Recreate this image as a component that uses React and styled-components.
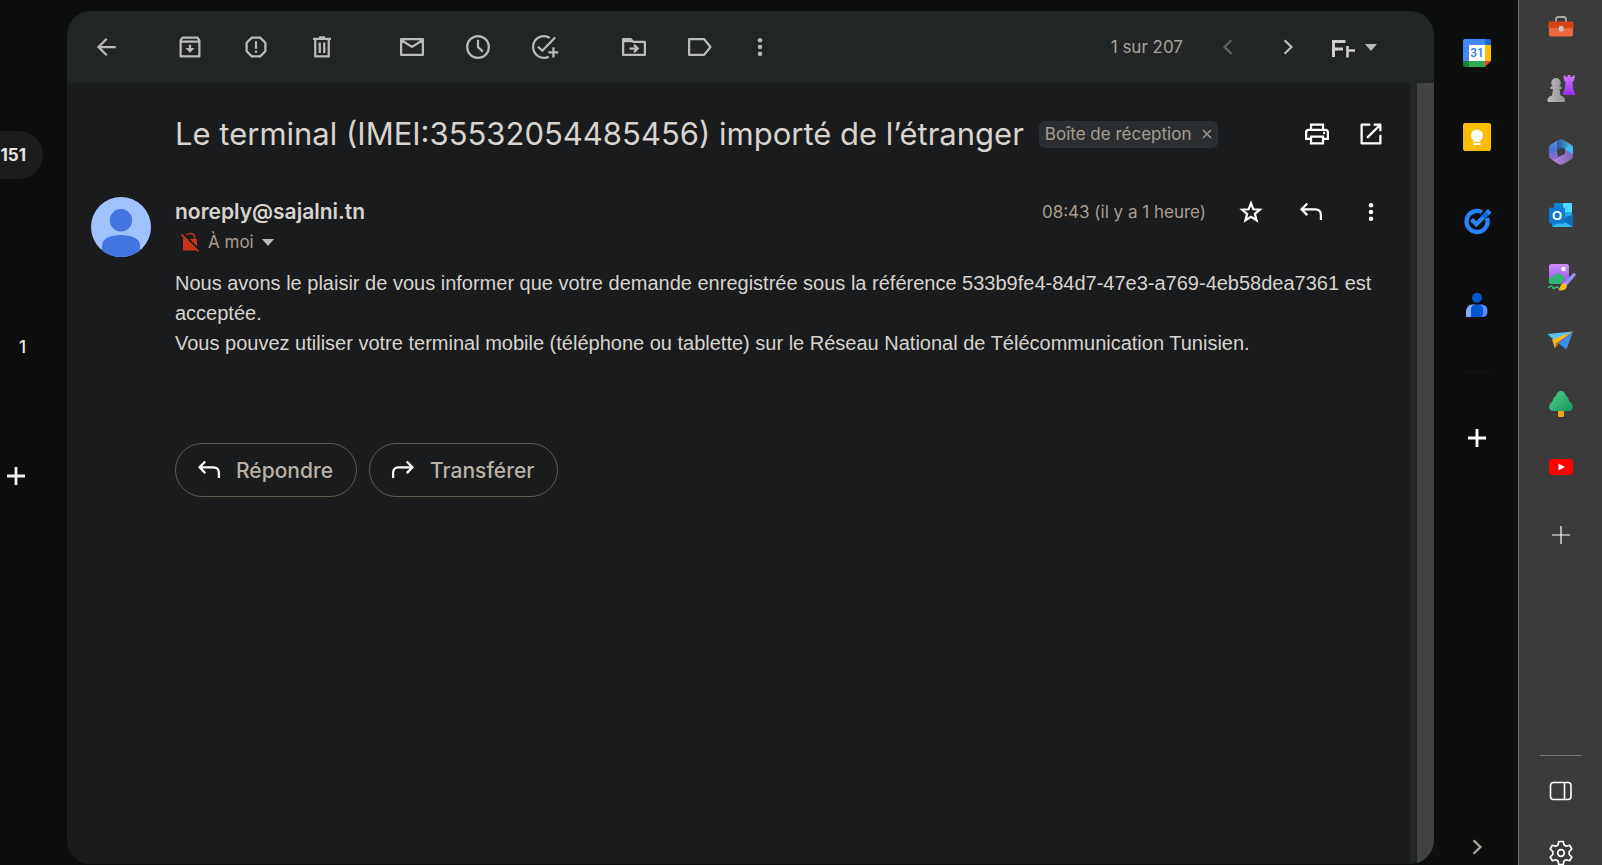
import React from "react";
import styled, { createGlobalStyle } from "styled-components";

const GlobalStyle = createGlobalStyle`
  * { box-sizing: border-box; }
  body {
    margin: 0;
    background: #0d0f0e;
    color: #d8d4cf;
    font-family: Inter, "Liberation Sans", sans-serif;
  }
  button { font: inherit; color: inherit; border: 0; padding: 0; background: none; cursor: pointer; }
`;

/* ---------- layout ---------- */

const Page = styled.div`
  display: grid;
  grid-template-columns: 67px minmax(0, 1fr) 84px 84px;
  height: 100vh;
  min-height: 600px;
  overflow: hidden;
`;

const Rail = styled.nav`
  display: flex;
  flex-direction: column;
  padding-top: 131px;
  font-size: 17px;
  line-height: 22px;
`;

const RailPill = styled.a`
  display: flex;
  align-items: center;
  justify-content: flex-end;
  width: 43px;
  height: 48px;
  padding-right: 17px;
  border-radius: 0 24px 24px 0;
  background: #1b1c1d;
  color: #e8e6e3;
  font-weight: 700;
  text-decoration: none;
`;

const RailCount = styled.a`
  width: 26px;
  margin-top: 157px;
  color: #e8e6e3;
  font-weight: 500;
  text-align: right;
  text-decoration: none;
`;

const RailAdd = styled.button`
  display: flex;
  width: 30px;
  margin: 103px 0 0 1px;
  color: #f2f0ed;
`;

const Panel = styled.main`
  display: flex;
  flex-direction: column;
  margin: 11px 0 1px;
  border-radius: 24px;
  background: #222526;
  overflow: hidden;
`;

const Toolbar = styled.header`
  display: flex;
  align-items: center;
  flex: none;
  height: 72px;
  padding: 0 57px 0 24px;
  color: #bcbbb9;
`;

const Group = styled.div`
  display: flex;
  align-items: center;
  gap: 36px;
  margin-left: ${(p) => p.$start || 0}px;
`;

const Divider = styled.span`
  width: 1px;
  height: 30px;
  margin-left: 30px;
  background: #1f2122;
`;

const IconButton = styled.button`
  display: flex;
  flex: none;
  color: ${(p) => p.$color || "inherit"};
`;

const Pager = styled.div`
  display: flex;
  align-items: center;
  margin-left: auto;
  font-size: 17px;
`;

const PageCount = styled.span`
  margin-right: 30px;
  color: #a8a29a;
`;

const Arrows = styled.div`
  display: flex;
  gap: 30px;
`;

const InputTool = styled.button`
  display: flex;
  align-items: center;
  gap: 9px;
  margin-left: 27px;
`;

const Scroller = styled.div`
  display: flex;
  flex: 1;
  min-height: 0;
`;

const Message = styled.article`
  flex: 1;
  min-width: 0;
  padding: 30px 24px 0;
  background: #1a1b1d;
`;

const Track = styled.div`
  width: 24px;
  padding-left: 7px;
`;

const Thumb = styled.div`
  height: 100%;
  background: #424242;
`;

const TitleRow = styled.div`
  display: flex;
  align-items: center;
  height: 42px;
  padding-left: 84px;
`;

const Title = styled.h1`
  margin: 0;
  font-size: 31px;
  line-height: 42px;
  font-weight: 400;
  white-space: nowrap;
`;

const Tag = styled.span`
  display: flex;
  align-items: center;
  gap: 11px;
  height: 27px;
  margin-left: 15px;
  padding: 0 6px;
  border-radius: 6px;
  background: #2a2e30;
  color: #a89e90;
  font-size: 17px;
  white-space: nowrap;
`;

const TitleActions = styled.div`
  display: flex;
  gap: 24px;
  margin-left: auto;
  color: #fff;
`;

const Sender = styled.section`
  display: grid;
  grid-template-columns: 60px minmax(0, 1fr);
  column-gap: 24px;
  margin-top: 42px;
`;

const SenderLine = styled.div`
  display: flex;
  align-items: center;
  height: 30px;
`;

const Name = styled.h2`
  margin: 0;
  font-size: 21px;
  line-height: 30px;
  font-weight: 600;
`;

const Meta = styled.div`
  display: flex;
  align-items: center;
  gap: 30px;
  margin-left: auto;
  color: #fff;
`;

const Time = styled.time`
  color: #a89e90;
  font-size: 17px;
`;

const Recipient = styled.button`
  display: flex;
  align-items: center;
  gap: 8px;
  height: 30px;
  padding-left: 5px;
  color: #a89e90;
  font-size: 17px;
`;

const Body = styled.div`
  padding: 11px 0 0 84px;
  font: 400 20px/30px "Liberation Sans", Arial, sans-serif;
`;

const Line = styled.p`
  margin: 0;
`;

const Replies = styled.div`
  display: flex;
  gap: 12px;
  padding: 85px 0 0 84px;
`;

const ReplyButton = styled.button`
  display: flex;
  align-items: center;
  gap: 12px;
  height: 54px;
  padding: 0 23px 0 18px;
  border: 1px solid #615a4d;
  border-radius: 27px;
  color: #b9b1a5;
  font-size: 21px;
  font-weight: 500;

  svg { color: #fff; }
`;

const AddOns = styled.aside`
  display: flex;
  flex-direction: column;
  align-items: center;
  padding: 38px 0 3px 1px;
  color: #fff;
`;

const AddOnList = styled.div`
  display: flex;
  flex-direction: column;
  gap: 54px;
`;

const AddOnRule = styled.hr`
  width: 30px;
  margin: 51px 0;
  border: 0;
  border-top: 1px solid #141716;
`;

const AddOnFooter = styled.div`
  margin-top: auto;
  color: #b0a89c;
`;

const Sidebar = styled.aside`
  display: flex;
  flex-direction: column;
  align-items: center;
  padding: 11px 0 0 1px;
  border-left: 1px solid #6d6d6d;
  background: #3b3b3b;
  color: #fff;
`;

const SidebarList = styled.div`
  display: flex;
  flex-direction: column;
  gap: 33px;
`;

const SidebarAdd = styled.div`
  margin-top: 38px;
`;

const SidebarFooter = styled.div`
  display: flex;
  flex-direction: column;
  align-items: center;
  gap: 32px;
  margin: auto 0 -3px;
`;

const SidebarRule = styled.hr`
  width: 42px;
  margin: 0 0 -12px;
  border: 0;
  border-top: 1px solid #777;
`;

/* ---------- icons ---------- */

const Icon = ({ size = 30, box = 20, children, sw = 1.5 }) => (
  <svg width={size} height={size} viewBox={`0 0 ${box} ${box}`} fill="none" stroke="currentColor" strokeWidth={sw} aria-hidden="true">
    {children}
  </svg>
);

const dots = (
  <g fill="currentColor" stroke="none">
    <circle cx="10" cy="5.5" r="1.5" /><circle cx="10" cy="10" r="1.5" /><circle cx="10" cy="14.5" r="1.5" />
  </g>
);
const Dots = () => <Icon>{dots}</Icon>;
const SlimDots = () => <svg width="18" height="30" viewBox="4 0 12 20" aria-hidden="true">{dots}</svg>;
const Caret = () => (
  <svg width="12" height="7" viewBox="0 0 12 7" aria-hidden="true"><path d="M0 0h12L6 7z" fill="#bcbbb9" /></svg>
);
const Back = () => <Icon><path d="M16.5 10H5.5M10.5 4.5 5 10l5.500 5.500" /></Icon>;
const Archive = () => (
  <Icon>
    <path d="M3.75 5.6 5 3.75h10l1.25 1.85v10.65H3.75zM3.75 6.4h12.5M10 8.5v3" strokeLinejoin="round" />
    <path d="M7 10.7h6L10 13.8z" fill="currentColor" stroke="none" />
  </Icon>
);
const Spam = () => (
  <Icon>
    <path d="M7.2 3.75h5.6l3.45 3.45v5.6l-3.45 3.45H7.2L3.75 12.8V7.2zM10 6.2v4.9M10 12.3v1.5" strokeLinejoin="round" />
  </Icon>
);
const Trash = () => <Icon><path d="M4 4.6h12M8 3.6h4M5.5 4.6v11.65h9V4.6M8.5 7v7M11.5 7v7" strokeLinejoin="round" /></Icon>;
const Mail = () => <Icon><path d="M2.75 4.75h14.5v10.5H2.75zM3 5.5l7 4.4 7-4.4" strokeLinejoin="round" /></Icon>;
const Clock = () => <Icon><circle cx="10" cy="10" r="7.25" /><path d="M10 5.2V10l3.2 3.1" /></Icon>;
const TaskAdd = () => (
  <Icon>
    <path d="M13.9 3.9A7.25 7.25 0 1 0 13.2 16.5M6 9.8l2.9 2.7 8.5-8.8M16.3 10.2v6.8M12.9 13.6h6.6" />
  </Icon>
);
const Folder = () => (
  <Icon>
    <path d="M2.75 15.25V4.75h5l1.7 1.75h7.8v8.75z" strokeLinejoin="round" />
    <path d="M2.5 4.5h5.4l1.8 2.3H2.5z" fill="currentColor" stroke="none" />
    <path d="M7 11h5M10 8.5l2.5 2.5-2.5 2.5" />
  </Icon>
);
const Label = () => <Icon><path d="M2.75 4.75h10L17 10l-4.25 5.25h-10z" strokeLinejoin="round" /></Icon>;
const ChevronLeft = () => <Icon><path d="m12.3 5.5-4.6 4.5 4.6 4.5" /></Icon>;
const ChevronRight = () => <Icon><path d="m7.7 5.5 4.6 4.5-4.6 4.5" /></Icon>;
const InputIcon = () => (
  <svg width="26" height="26" viewBox="0 0 26 26" fill="none" stroke="#cfcdca" aria-hidden="true">
    <path d="M3.500 23V6M2 7.500H15.500M3.500 15H13" strokeWidth="3" />
    <path d="M17.500 12v11.500M17.500 16.500H25" strokeWidth="2.600" />
  </svg>
);
const Print = () => (
  <Icon>
    <path d="M6 7V3.75h8V7M5.5 13.3H2.75V9c0-1 .7-1.8 1.7-1.8h11.1c1 0 1.7.8 1.7 1.8v4.3H14.5M6 11.8h8v4.45H6z" />
    <circle cx="14.7" cy="9.3" r=".8" fill="currentColor" stroke="none" />
  </Icon>
);
const OpenNew = () => <Icon><path d="M9.5 3.75H3.75v12.5h12.5V10.5M11.8 3.75h4.45V8.2M16 4l-8.6 8.6" strokeLinejoin="round" /></Icon>;
const Star = () => (
  <Icon>
    <path d="m10 4.2 1.6 4 4.3.3-3.3 2.8 1.1 4.2L10 13.2l-3.7 2.3 1.1-4.2-3.3-2.8 4.3-.3z" />
  </Icon>
);
const Reply = () => <Icon><path d="M7.5 4.3 3.7 8.2l3.8 3.9M4 8.2h9c2.2 0 3.6 1.5 3.6 3.7v3.4" /></Icon>;
const Forward = () => <Icon><path d="m12.5 4.3 3.8 3.9-3.8 3.9M16 8.2H7c-2.2 0-3.6 1.5-3.6 3.7v3.4" /></Icon>;
const Close = () => <Icon size={10} box={10} sw={1.4}><path d="m1 1 8 8M9 1 1 9" /></Icon>;
const Plus = ({ sw = 1.5 }) => <Icon sw={sw}><path d="M10 4v12M4 10h12" /></Icon>;
const BoldPlus = () => <Plus sw={1.9} />;

const NoLock = () => (
  <svg width="20" height="20" viewBox="0 0 20 20" fill="none" aria-hidden="true">
    <path d="M6.500 3C7.500 1.900 9 1.500 10.500 1.500c2.500 0 4 1.700 4 4V8" stroke="#a02e20" strokeWidth="2" />
    <path d="M3 4.500 16.500 18.500H3z" fill="#c5341f" />
    <path d="M9.500 7h7.500v7.500z" fill="#c5341f" />
    <path d="m1.500 2.500 17 17" stroke="#c5341f" strokeWidth="1.800" />
    <path d="m4 2.500 13 13" stroke="#1a1b1d" strokeWidth="1" />
  </svg>
);

const Avatar = () => (
  <svg width="60" height="60" viewBox="0 0 60 60" role="img" aria-label="noreply@sajalni.tn">
    <defs><clipPath id="face"><circle cx="30" cy="30" r="30" /></clipPath></defs>
    <g clipPath="url(#face)">
      <path d="M0 0h60v60H0z" fill="#a0c2ff" />
      <circle cx="30" cy="23.300" r="11.200" fill="#4374e0" />
      <path d="M11 60V48c0-6.500 9-10 19-10s19 3.500 19 10v12z" fill="#4374e0" />
    </g>
  </svg>
);

const DayText = styled.text`
  font: 500 12px Roboto, sans-serif;
  fill: #2f77ee;
`;

const Calendar = () => (
  <svg width="30" height="30" viewBox="0 0 30 30" aria-hidden="true">
    <path d="M3 1h20v6H7v16H1V3a2 2 0 0 1 2-2z" fill="#4285f4" />
    <path d="M23 1h4a2 2 0 0 1 2 2v4h-6z" fill="#1967d2" />
    <path d="M23 7h6v16h-6z" fill="#fbbc04" />
    <path d="M7 23h16v6H7z" fill="#34a853" />
    <path d="M1 23h6v6H3a2 2 0 0 1-2-2z" fill="#188038" />
    <path d="M23 23h6l-6 6z" fill="#ea4335" />
    <path d="M7 7h16v16H7z" fill="#fff" />
    <DayText x="15" y="19" textAnchor="middle">31</DayText>
  </svg>
);
const Keep = () => (
  <svg width="30" height="30" viewBox="0 0 30 30" aria-hidden="true">
    <rect x="1" y="1" width="28" height="28" rx="2" fill="#fbbc04" />
    <circle cx="15" cy="13.500" r="6" fill="#fff" />
    <path d="M11.500 17h7v2.800h-7zM11.500 21h7v2h-7z" fill="#fff" />
  </svg>
);
const Tasks = () => (
  <svg width="30" height="30" viewBox="0 0 30 30" fill="none" aria-hidden="true">
    <path d="M20 6.200A10.500 10.500 0 1 0 25 12" stroke="#2684fc" strokeWidth="4.300" />
    <path d="m9.500 13.500 4.800 4.800L22 10.500" stroke="#2684fc" strokeWidth="4.300" />
    <path d="m21 11.500 6-6" stroke="#0066da" strokeWidth="5" />
    <path d="m23.500 5.500 3.500 3.500 2.500-2.500-3.500-3.500z" fill="#2684fc" />
  </svg>
);
const Contacts = () => (
  <svg width="30" height="30" viewBox="0 0 30 30" aria-hidden="true">
    <circle cx="15" cy="7.800" r="5" fill="#0057cc" />
    <path d="M4 27v-5c0-5 3-7.500 7-7.500h2V27z" fill="#86a9ff" />
    <path d="M17 14.500h2c4 0 6.500 2.500 6.500 6.500s-2 6-5.500 6h-3z" fill="#578cff" />
    <path d="M9 27v-7c0-4 2-5.500 6-5.500s6 1.500 6 5.500v4c0 2-1 3-3 3z" fill="#0057cc" />
  </svg>
);

const Toolbox = () => (
  <svg width="30" height="30" viewBox="0 0 30 30" aria-hidden="true">
    <path d="M10 11V8.500C10 6.700 10.700 6 12.500 6h5c1.800 0 2.500.7 2.500 2.500V11" fill="none" stroke="#a9a9a9" strokeWidth="1.800" />
    <path d="M3 14h24v9.500a2 2 0 0 1-2 2H5a2 2 0 0 1-2-2z" fill="#f0683f" />
    <path d="M3 10.500h24l1 6.500H2z" fill="#d64516" />
    <rect x="13" y="15" width="4.500" height="5.500" rx="1" fill="#c9c4c2" />
  </svg>
);
const Chess = () => (
  <svg width="30" height="30" viewBox="0 0 30 30" aria-hidden="true">
    <defs>
      <linearGradient id="rook" x2="0" y2="1"><stop stopColor="#cc7cff" /><stop offset="1" stopColor="#9a2bfa" /></linearGradient>
      <linearGradient id="pawn"><stop stopColor="#bdbdbd" /><stop offset="1" stopColor="#929292" /></linearGradient>
    </defs>
    <path d="M17.500 1.500h2V3h2V1h3v2h2V1.500H29l-1 5-1.500 1.500 1 8.500 1.500 2V21H17v-2.500l1.500-2L19.500 8 18 6.500z" fill="url(#rook)" />
    <path d="M6.800 12.500a4.800 4.800 0 1 1 6.400 0H15.500v2.500h-2l1 6.500c3 1 4.500 2 4.500 4.500 0 1.500-.5 2-1.500 2H3c-1 0-1.500-.5-1.500-2 0-2.500 1.500-3.500 4.500-4.500l1-6.500H4.500v-2.500z" fill="url(#pawn)" />
  </svg>
);
const Office = () => (
  <svg width="30" height="30" viewBox="0 0 30 30" aria-hidden="true">
    <defs>
      <linearGradient id="offA" x2="0" y2="1"><stop stopColor="#4f9be6" /><stop offset=".5" stopColor="#5070cc" /><stop offset="1" stopColor="#9b6bd0" /></linearGradient>
      <linearGradient id="offB"><stop stopColor="#2b5796" /><stop offset="1" stopColor="#4cc3f3" /></linearGradient>
      <linearGradient id="offC"><stop stopColor="#c48ae0" /><stop offset="1" stopColor="#7762b0" /></linearGradient>
    </defs>
    <path d="M12.500 3 5 7.500c-1.500 1-2 2-2 3.500V19c0 3 3.500 4.500 6 3l3-2-1-9 6-5.500z" fill="url(#offA)" />
    <path d="M12.500 3C14 2 16 2 17.500 3L25 7.500c1.500 1 2 2 2 3.500v6.500l-8-5.500-4-1-4 2.500V7c0-2 .5-3.200 1.500-4z" fill="url(#offB)" />
    <path d="M27 13.500V19c0 1.500-.5 2.500-2 3.500L17.500 27c-1.500 1-3.500 1-5 0L5 22.300c2 .6 3.500.2 5-.8l7-4.500c1.500-1 2-2 2-3.500v-2l6 3.500z" fill="url(#offC)" />
    <path d="m15 10.500 4 1.500v4.500L15 19l-3.500-2v-4z" fill="#3b3b45" />
    <path d="m19 12 8 5.500V11l-4-3z" fill="#43b7ee" />
  </svg>
);
const OutlookText = styled.text`
  font: 700 13px "Liberation Sans", sans-serif;
  fill: #fff;
`;
const Outlook = () => (
  <svg width="30" height="30" viewBox="0 0 30 30" aria-hidden="true">
    <path d="M8 3h18v13H8z" fill="#28a8ea" />
    <path d="M17 3h9v9h-9z" fill="#50d9ff" />
    <path d="M8 3h9v9H8z" fill="#0a84d0" />
    <path d="M6 16h21v9a2 2 0 0 1-2 2H8a2 2 0 0 1-2-2z" fill="#1490df" />
    <path d="m27 14-11 6.500L27 27z" fill="#0d6cb5" />
    <path d="m6 27 10-6.500L27 27z" fill="#36b5ee" />
    <rect x="3" y="7.500" width="16" height="16" rx="1.500" fill="#0f78d4" />
    <OutlookText x="11" y="20" textAnchor="middle">O</OutlookText>
  </svg>
);
const Designer = () => (
  <svg width="30" height="30" viewBox="0 0 30 30" aria-hidden="true">
    <defs><linearGradient id="pic" x2="0" y2="1"><stop stopColor="#cf8bff" /><stop offset="1" stopColor="#8e54e8" /></linearGradient></defs>
    <rect x="3" y="1" width="20" height="20" rx="2.500" fill="url(#pic)" />
    <path d="m3 16 8-5.500c1-.7 2-.7 3 0l5 4.500-5 6H5.500C4 21 3 20 3 18.500z" fill="#2fb673" />
    <circle cx="17.500" cy="6" r="2.300" fill="#fff" />
    <path d="M2 25c3-3 5-2 5 0s4-2 5-1 0 2 2 2" fill="none" stroke="#2fc47d" strokeWidth="1.500" />
    <path d="m17 20.500 10-10c1.500-1.200 3.500.5 2.500 2l-9 10.500z" fill="#8f94fa" />
    <path d="M12.500 27c2-1 1-5 4-6.500 2.500-1 5 1.500 4 4-1 2.500-5 4-8 2.500z" fill="#f9b915" />
  </svg>
);
const Plane = () => (
  <svg width="30" height="30" viewBox="0 0 30 30" aria-hidden="true">
    <path d="m1.500 8 25.500-2.500L8 14z" fill="#55c3f5" />
    <path d="M27 5.500 20.500 23.500 12 17z" fill="#3f8cf0" />
    <path d="M27 5.500 6 13.500 9 22.500l3-6z" fill="#fbb81a" />
    <path d="m9 22.500 1-6 2.500 1.500z" fill="#b77209" />
  </svg>
);
const Tree = () => (
  <svg width="30" height="30" viewBox="0 0 30 30" aria-hidden="true">
    <defs><linearGradient id="leaf" x2="1" y2="1"><stop stopColor="#51d58b" /><stop offset="1" stopColor="#15915f" /></linearGradient></defs>
    <path d="M12 20h6v6.500c0 .8-.7 1.500-1.500 1.500h-3c-.8 0-1.500-.7-1.500-1.500z" fill="#f0a51c" />
    <path d="M15 2c-3 0-4 2-5 5-3 1.500-2 3-4 6-4 2.500-4 9 1.500 9h15c5.500 0 5.500-6.500 1.500-9-2-3-1-4.500-4-6-1-3-2-5-5-5z" fill="url(#leaf)" />
  </svg>
);
const Youtube = () => (
  <svg width="30" height="30" viewBox="0 0 30 30" aria-hidden="true">
    <rect x="3" y="7" width="24" height="16" rx="3" fill="#f00" />
    <path d="m12.500 11.500 6.500 3.500-6.500 3.500z" fill="#fff" />
  </svg>
);
const PanelIcon = () => (
  <Icon box={30} sw={1.6}><rect x="4.500" y="6.500" width="20.500" height="17" rx="3" /><path d="M18.500 6.500v17" /></Icon>
);
const Gear = () => (
  <Icon box={30} sw={1.7}>
    <circle cx="15" cy="15" r="3.300" />
    <path strokeLinejoin="round" d="M12.800 3.500h4.400l.8 3.400 2.200 1.300 3.400-1 2.200 3.800-2.600 2.500v3l2.600 2.500-2.200 3.800-3.400-1-2.200 1.300-.8 3.400h-4.400l-.8-3.400-2.200-1.300-3.400 1L4.200 19l2.600-2.500v-3L4.200 11l2.200-3.800 3.400 1L12 6.900z" />
  </Icon>
);

/* ---------- page ---------- */

const addOns = [["Agenda", Calendar], ["Keep", Keep], ["Tasks", Tasks], ["Contacts", Contacts]];
const apps = [
  ["Outils", Toolbox], ["Jeux", Chess], ["Microsoft 365", Office], ["Outlook", Outlook],
  ["Designer", Designer], ["Drop", Plane], ["Arbre", Tree], ["YouTube", Youtube],
];
const toolGroups = [
  [["Archiver", Archive], ["Signaler comme spam", Spam], ["Supprimer", Trash]],
  [["Marquer comme non lu", Mail], ["Mettre en attente", Clock], ["Ajouter à Tasks", TaskAdd]],
  [["Déplacer vers", Folder], ["Libellés", Label], ["Plus", SlimDots]],
];

const Tool = ({ label, icon: Glyph, color }) => (
  <IconButton type="button" aria-label={label} $color={color}><Glyph /></IconButton>
);

export default function App() {
  return (
    <>
      <GlobalStyle />
      <Page>
        <Rail>
          <RailPill href="#inbox">151</RailPill>
          <RailCount href="#drafts">1</RailCount>
          <RailAdd type="button" aria-label="Créer un libellé"><BoldPlus /></RailAdd>
        </Rail>

        <Panel>
          <Toolbar>
            <Tool label="Retour" icon={Back} />
            {toolGroups.map((group, i) => (
              <React.Fragment key={i}>
                {i > 0 && <Divider />}
                <Group $start={i === 0 ? 54 : 29}>
                  {group.map(([label, icon]) => <Tool key={label} label={label} icon={icon} />)}
                </Group>
              </React.Fragment>
            ))}
            <Pager>
              <PageCount>1 sur 207</PageCount>
              <Arrows>
                <Tool label="Plus récents" icon={ChevronLeft} color="#5f6162" />
                <Tool label="Plus anciens" icon={ChevronRight} />
              </Arrows>
              <InputTool type="button" aria-label="Outils de saisie"><InputIcon /><Caret /></InputTool>
            </Pager>
          </Toolbar>

          <Scroller>
            <Message>
              <TitleRow>
                <Title>Le terminal (IMEI:35532054485456) importé de l’étranger</Title>
                <Tag>
                  Boîte de réception
                  <IconButton type="button" aria-label="Retirer le libellé"><Close /></IconButton>
                </Tag>
                <TitleActions>
                  <Tool label="Imprimer" icon={Print} />
                  <Tool label="Nouvelle fenêtre" icon={OpenNew} />
                </TitleActions>
              </TitleRow>

              <Sender>
                <Avatar />
                <div>
                  <SenderLine>
                    <Name>noreply@sajalni.tn</Name>
                    <Meta>
                      <Time>08:43 (il y a 1 heure)</Time>
                      <Tool label="Suivre" icon={Star} />
                      <Tool label="Répondre" icon={Reply} />
                      <Tool label="Plus" icon={Dots} />
                    </Meta>
                  </SenderLine>
                  <Recipient type="button"><NoLock />À moi<Caret /></Recipient>
                </div>
              </Sender>

              <Body>
                <Line>
                  Nous avons le plaisir de vous informer que votre demande enregistrée sous la référence
                  533b9fe4-84d7-47e3-a769-4eb58dea7361 est acceptée.
                </Line>
                <Line>
                  Vous pouvez utiliser votre terminal mobile (téléphone ou tablette) sur le Réseau National de
                  Télécommunication Tunisien.
                </Line>
              </Body>

              <Replies>
                <ReplyButton type="button"><Reply />Répondre</ReplyButton>
                <ReplyButton type="button"><Forward />Transférer</ReplyButton>
              </Replies>
            </Message>
            <Track><Thumb /></Track>
          </Scroller>
        </Panel>

        <AddOns>
          <AddOnList>
            {addOns.map(([label, icon]) => <Tool key={label} label={label} icon={icon} />)}
          </AddOnList>
          <AddOnRule />
          <Tool label="Modules complémentaires" icon={BoldPlus} />
          <AddOnFooter><Tool label="Masquer le panneau" icon={ChevronRight} /></AddOnFooter>
        </AddOns>

        <Sidebar>
          <SidebarList>
            {apps.map(([label, icon]) => <Tool key={label} label={label} icon={icon} />)}
          </SidebarList>
          <SidebarAdd>
            <IconButton type="button" aria-label="Personnaliser"><Plus sw={0.8} /></IconButton>
          </SidebarAdd>
          <SidebarFooter>
            <SidebarRule />
            <Tool label="Volet" icon={PanelIcon} />
            <Tool label="Paramètres" icon={Gear} />
          </SidebarFooter>
        </Sidebar>
      </Page>
    </>
  );
}
